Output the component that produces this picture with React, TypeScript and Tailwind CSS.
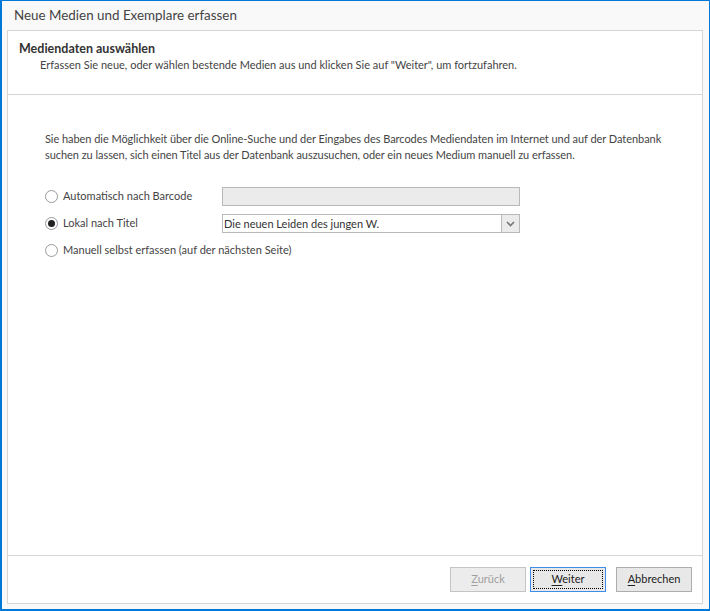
import { useState } from "react";

function Radio({ checked }: { checked: boolean }) {
  return (
    <span className="flex h-[13px] w-[13px] shrink-0 items-center justify-center rounded-full border border-[#9a9a9a] bg-white">
      {checked ? <span className="h-[7px] w-[7px] rounded-full bg-[#222]" /> : null}
    </span>
  );
}

export default function App() {
  const [mode, setMode] = useState("titel");

  const options = [
    { key: "barcode", label: "Automatisch nach Barcode" },
    { key: "titel", label: "Lokal nach Titel" },
    { key: "manuell", label: "Manuell selbst erfassen (auf der nächsten Seite)" },
  ];

  return (
    <div
      className="flex h-[611px] w-[710px] flex-col border-t border-r border-b-2 border-l-2 border-[#0078d7] bg-[#f9f9f9] text-[11px] text-[#444]"
      style={{ fontFamily: 'Lato, "Noto Sans", sans-serif' }}>
      <div className="flex h-[29px] items-center pl-[12px] text-[13.4px] text-[#444]">
        Neue Medien und Exemplare erfassen
      </div>

      <div className="mb-[5px] ml-[5px] mr-[6px] flex flex-1 flex-col border border-[#d6d6d6] bg-white">
        <div className="h-[64px] border-b border-[#d6d6d6] pl-[11px] pt-[10px]">
          <div className="text-[12.5px] font-bold leading-[16px] text-[#333]">Mediendaten auswählen</div>
          <div className="whitespace-nowrap pl-[21px] leading-[16px]">
            Erfassen Sie neue, oder wählen bestende Medien aus und klicken Sie auf "Weiter", um fortzufahren.
          </div>
        </div>

        <div className="flex-1 pl-[37px] pt-[36px]">
          <p className="whitespace-nowrap leading-[16px] tracking-[-0.05px]">
            Sie haben die Möglichkeit über die Online-Suche und der Eingabes des Barcodes Mediendaten im Internet und auf der Datenbank
            <br />
            suchen zu lassen, sich einen Titel aus der Datenbank auszusuchen, oder ein neues Medium manuell zu erfassen.
          </p>

          <div className="mt-[24px] flex flex-col gap-[8px]">
            {options.map((o) => (
              <div key={o.key} className="flex h-[19px] items-center">
                <button
                  className="flex w-[177px] items-center gap-[5px] text-left"
                  onClick={() => setMode(o.key)}>
                  <Radio checked={mode === o.key} />
                  <span className="whitespace-nowrap">{o.label}</span>
                </button>
                {o.key === "barcode" ? (
                  <div className="h-[19px] w-[298px] border border-[#b9b9b9] bg-[#ebebeb]" />
                ) : null}
                {o.key === "titel" ? (
                  <div className="flex h-[19px] w-[298px] border border-[#b9b9b9] bg-white">
                    <span className="flex-1 pl-[1px] leading-[17px] text-[#333]">Die neuen Leiden des jungen W.</span>
                    <span className="flex w-[18px] items-center justify-center border-l border-[#b9b9b9] bg-[#ebebeb]">
                      <svg width="9" height="6" viewBox="0 0 9 6">
                        <path d="M1 1 L4.5 4.5 L8 1" fill="none" stroke="#777" strokeWidth="1.6" />
                      </svg>
                    </span>
                  </div>
                ) : null}
              </div>
            ))}
          </div>
        </div>

        <div className="flex h-[48px] items-start justify-end gap-[4px] border-t border-[#d6d6d6] pr-[10px] pt-[11px]">
          <button className="h-[25px] w-[76px] border border-[#c4c4c4] bg-[#ececec] text-[#a0a0a0]">
            <span className="underline underline-offset-2">Z</span>urück
          </button>
          <button className="flex h-[25px] w-[76px] items-center justify-center border border-[#3c8ee8] bg-[#e8e8e8] text-[#222]">
            <span className="flex h-[19px] w-[70px] items-center justify-center border border-dotted border-black">
              <span>
                <span className="underline underline-offset-2">W</span>eiter
              </span>
            </span>
          </button>
          <button className="ml-[6px] h-[25px] w-[76px] border border-[#adadad] bg-[#e8e8e8] text-[#222]">
            <span className="underline underline-offset-2">A</span>bbrechen
          </button>
        </div>
      </div>
    </div>
  );
}
